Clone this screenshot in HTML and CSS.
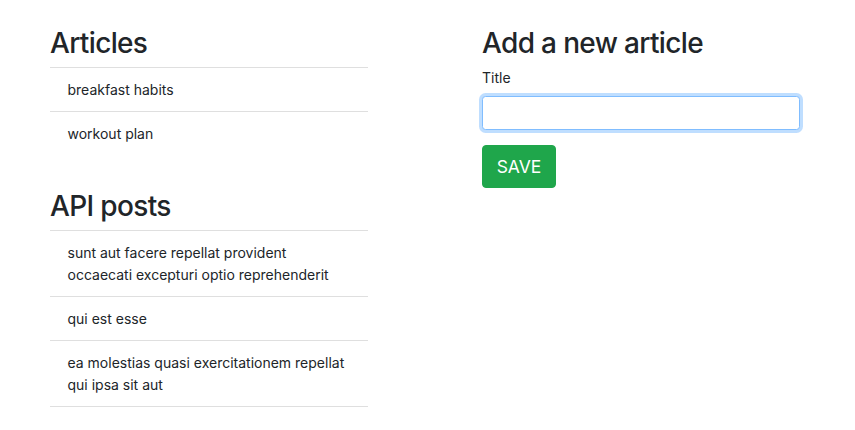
FILE: index.html
```html
<!DOCTYPE html>
<html lang="en">
<head>
<meta charset="utf-8">
<title>Articles</title>
<link rel="stylesheet" href="styles.css">
</head>
<body>
<div class="container">
  <div class="col">
    <h2 class="heading">Articles</h2>
    <ul class="list list-articles">
      <li class="item">breakfast habits</li>
      <li class="item">workout plan</li>
    </ul>
    <h2 class="heading">API posts</h2>
    <ul class="list list-posts">
      <li class="item">sunt aut facere repellat provident occaecati excepturi optio reprehenderit</li>
      <li class="item">qui est esse</li>
      <li class="item">ea molestias quasi exercitationem repellat qui ipsa sit aut</li>
    </ul>
  </div>
  <div class="col">
    <h2 class="heading">Add a new article</h2>
    <form class="form">
      <label class="label" for="title">Title</label>
      <input class="input" id="title" type="text">
      <button class="btn" type="button">SAVE</button>
    </form>
  </div>
</div>
</body>
</html>
```
FILE: styles.css
```css
* { box-sizing: border-box; }
html, body { margin: 0; padding: 0; background: #fff; }
body {
  font-family: Inter, "Liberation Sans", Arial, sans-serif;
  font-size: 14px;
  line-height: 21px;
  color: #212529;
}
.container {
  display: grid;
  grid-template-columns: 318px 318px;
  column-gap: 114px;
  padding: 26px 0 0 50px;
}
.heading {
  margin: 0 0 7px;
  font-size: 28px;
  line-height: 34px;
  font-weight: 500;
  letter-spacing: -0.65px;
}
.list {
  list-style: none;
  margin: 0;
  padding: 0;
}
.list-articles { margin-bottom: 34px; }
.item {
  padding: 10.5px 17.5px 10.5px 17.5px;
  line-height: 22px;
  border-top: 1px solid #dfdfdf;
}
.list-posts .item:last-child { border-bottom: 1px solid #dfdfdf; }
.form { display: flex; flex-direction: column; align-items: flex-start; }
.label {
  display: block;
  margin-bottom: 8px;
  line-height: 21px;
}
.input {
  width: 100%;
  height: 34px;
  border: 1px solid #80bdff;
  border-radius: 3.5px;
  box-shadow: 0 0 0 3px rgba(0, 123, 255, 0.25);
  outline: none;
  font: inherit;
  padding: 5px 10.5px;
  margin-bottom: 15px;
}
.btn {
  width: 74px;
  height: 43px;
  background: #1fa64b;
  border: 1px solid #1fa64b;
  border-radius: 4px;
  color: #fff;
  font-family: inherit;
  font-size: 17.5px;
  padding: 0;
}
```
